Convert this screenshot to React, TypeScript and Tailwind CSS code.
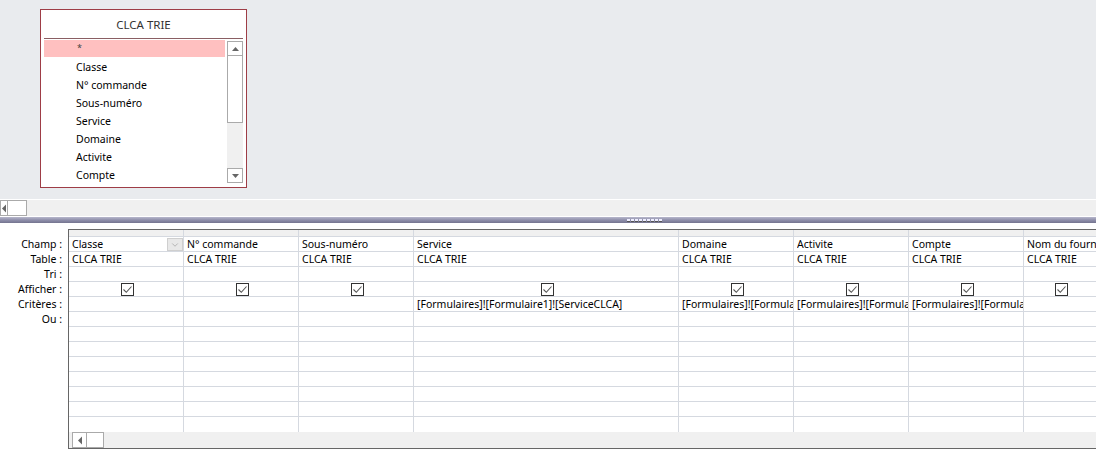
import { ChevronDown } from 'lucide-react'

const fields = ['Classe', 'N° commande', 'Sous-numéro', 'Service', 'Domaine', 'Activite', 'Compte']

const columns = [
  { w: 'w-[115px]', champ: 'Classe', crit: '', dropdown: true },
  { w: 'w-[115px]', champ: 'N° commande', crit: '' },
  { w: 'w-[115px]', champ: 'Sous-numéro', crit: '' },
  { w: 'w-[265px]', champ: 'Service', crit: '[Formulaires]![Formulaire1]![ServiceCLCA]' },
  { w: 'w-[115px]', champ: 'Domaine', crit: '[Formulaires]![Formulaire1]![DomaineCLCA]' },
  { w: 'w-[115px]', champ: 'Activite', crit: '[Formulaires]![Formulaire1]![ActiviteCLCA]' },
  { w: 'w-[115px]', champ: 'Compte', crit: '[Formulaires]![Formulaire1]![CompteCLCA]' },
  { w: 'w-[115px]', champ: 'Nom du fournisseur', crit: '', last: true },
]

const labels = ['Champ :', 'Table :', 'Tri :', 'Afficher :', 'Critères :', 'Ou :']

const Check = () => (
  <div className="w-[13px] h-[13px] border border-[#333] bg-white flex items-center justify-center">
    <svg width="11" height="11" viewBox="0 0 11 11">
      <path d="M1.5 5.5 L4.3 8.3 L9.5 2.5" fill="none" stroke="#555" strokeWidth="1.1" />
    </svg>
  </div>
)

const Cell = ({ children, center }: { children?: React.ReactNode; center?: boolean }) => (
  <div
    className={`h-[15px] border-b border-[#d5d9e0] overflow-hidden whitespace-nowrap leading-[14px] pl-[3px] ${
      center ? 'flex justify-center items-center pl-0' : ''
    }`}
  >
    {children}
  </div>
)

const Arrow = ({ dir }: { dir: 'up' | 'down' | 'left' }) => {
  const d = dir === 'up' ? 'M1 5 L4.5 1 L8 5 Z' : dir === 'down' ? 'M1 1 L4.5 5 L8 1 Z' : 'M5 0.5 L1 4.5 L5 8.5 Z'
  const size = dir === 'left' ? { w: 6, h: 9 } : { w: 9, h: 6 }
  return (
    <svg width={size.w} height={size.h} viewBox={`0 0 ${size.w} ${size.h}`}>
      <path d={d} fill="#666" />
    </svg>
  )
}

export default function App() {
  return (
    <div className="w-[1096px] h-[466px] bg-white overflow-hidden text-[10.5px] text-black font-['Noto_Sans',sans-serif]">
      {/* upper pane */}
      <div className="h-[199px] bg-[#e9ebee] pt-[9px] pl-[40px]">
        <div className="w-[207px] h-[179px] border border-[#9e3d46] bg-white flex flex-col px-[3px]">
          <div className="h-[29px] border-b border-[#8a5e63] flex items-center justify-center text-[#333] text-[11.5px] pt-[1px]">
            CLCA TRIE
          </div>
          <div className="flex flex-1 pt-[1px] pb-[3px]">
            <div className="flex-1 flex flex-col">
              <div className="h-[17px] bg-[#ffc0c0] pl-[33px] leading-[15px] text-[#444] text-[9px]">*</div>
              {fields.map((f) => (
                <div key={f} className="h-[18px] pl-[32px] leading-[18px] pt-[1px]">
                  {f}
                </div>
              ))}
            </div>
            <div className="w-[16px] ml-[2px] mt-[1px] mb-[1px] bg-[#f0f0f0] flex flex-col">
              <div className="h-[15px] border border-[#aaa] bg-white flex items-center justify-center">
                <Arrow dir="up" />
              </div>
              <div className="h-[67px] border border-t-0 border-[#aaa] bg-white" />
              <div className="flex-1" />
              <div className="h-[15px] border border-[#aaa] bg-white flex items-center justify-center">
                <Arrow dir="down" />
              </div>
            </div>
          </div>
        </div>
      </div>

      {/* upper horizontal scrollbar */}
      <div className="h-[1px] bg-white" />
      <div className="h-[16px] bg-[#f0f0f0] flex">
        <div className="w-[8px] h-[16px] border border-[#aaa] bg-white flex items-center justify-start">
          <Arrow dir="left" />
        </div>
        <div className="w-[19px] h-[16px] border border-l-0 border-[#aaa] bg-white" />
      </div>
      <div className="h-[1px] bg-white" />

      {/* splitter */}
      <div className="h-[6px] bg-gradient-to-b from-[#b8b8cc] via-[#8f8fab] to-[#74748f] flex items-center pl-[627px]">
        <div className="flex gap-[1px] mt-[1px]">
          {Array.from({ length: 9 }).map((_, i) => (
            <div key={i} className="w-[3px] h-[3px] bg-[#eef] border-b border-[#555]" />
          ))}
        </div>
      </div>

      {/* design grid */}
      <div className="flex pt-[6px]">
        <div className="w-[68px] shrink-0 flex flex-col items-end pr-[6px] pt-[8px]">
          {labels.map((l) => (
            <div key={l} className="h-[15px] leading-[14px] whitespace-nowrap">
              {l}
            </div>
          ))}
        </div>
        <div className="flex-1 min-w-0 overflow-hidden border-t border-l border-b border-[#666] flex flex-col h-[220px]">
          <div className="flex flex-1">
            {columns.map((c) => (
              <div
                key={c.champ}
                className={`${c.last ? 'flex-1 min-w-0' : c.w + ' border-r border-[#d5d9e0]'} shrink-0 flex flex-col`}
              >
                <div className="h-[7px] bg-[#f0f0f0] border-b border-[#d5d9e0]" />
                <div className="h-[15px] border-b border-[#d5d9e0] overflow-hidden whitespace-nowrap leading-[14px] pl-[3px] flex">
                  <span className="flex-1 overflow-hidden">{c.champ}</span>
                  {c.dropdown && (
                    <div className="w-[16px] h-[13px] mt-[1px] bg-[#e8e8e8] border border-[#cfcfcf] flex items-center justify-center">
                      <ChevronDown size={10} strokeWidth={1.3} color="#888" />
                    </div>
                  )}
                </div>
                <Cell>CLCA TRIE</Cell>
                <Cell />
                <Cell center>
                  <Check />
                </Cell>
                <Cell>{c.crit}</Cell>
                {Array.from({ length: 7 }).map((_, i) => (
                  <Cell key={i} />
                ))}
                <div className="flex-1" />
              </div>
            ))}
          </div>
          <div className="h-[16px] bg-[#f0f0f0] flex pl-[3px]">
            <div className="w-[15px] h-[16px] border border-[#aaa] bg-white flex items-center justify-center">
              <Arrow dir="left" />
            </div>
            <div className="w-[17px] h-[16px] border border-l-0 border-[#aaa] bg-white" />
          </div>
        </div>
      </div>
    </div>
  )
}
